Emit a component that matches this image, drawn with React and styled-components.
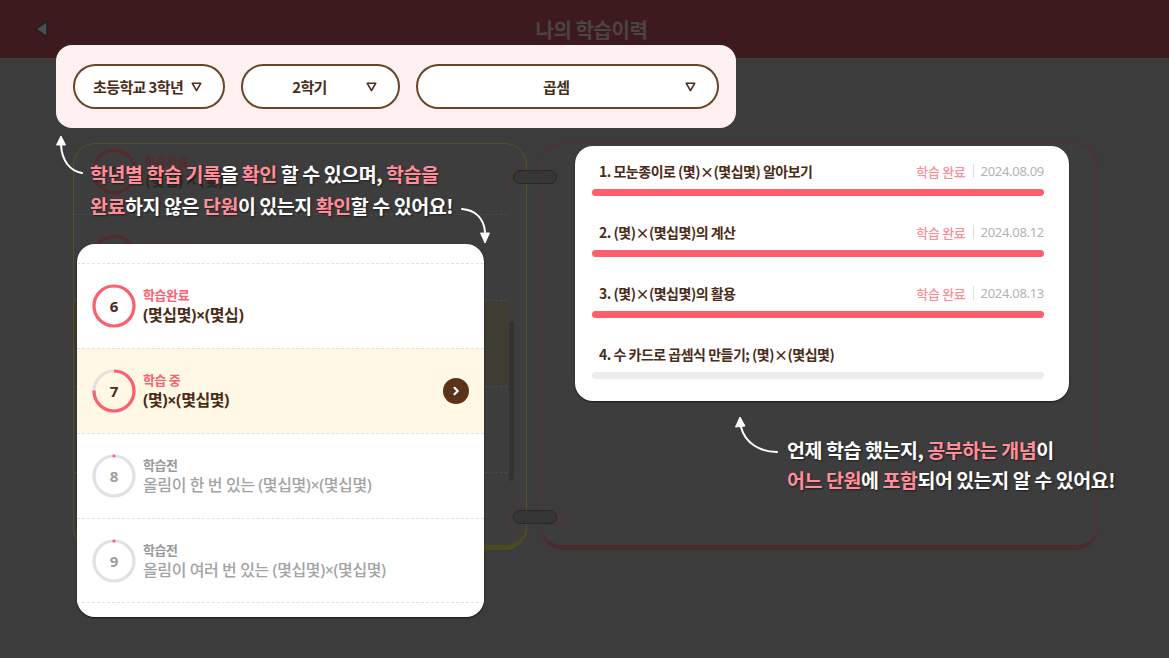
import React from 'react';
import styled, { createGlobalStyle } from 'styled-components';

const GlobalStyle = createGlobalStyle`
  html, body { margin: 0; padding: 0; background: #3c3c3c; }
  body { font-family: "Noto Sans CJK KR", "Noto Sans", sans-serif; }
  * { box-sizing: border-box; }
`;

const FONT = `"Noto Sans CJK KR", "Noto Sans", sans-serif`;
const LATIN_FIRST = `"Noto Sans", "Noto Sans CJK KR", sans-serif`;

const Page = styled.div`
  position: relative;
  width: 1169px;
  height: 658px;
  overflow: hidden;
  background: #3c3c3c;
  font-family: ${FONT};
`;

const TopBar = styled.header`
  height: 58px;
  background: #3d1a1d;
  display: grid;
  grid-template-columns: 80px 1fr 80px;
  align-items: center;
`;

const BackButton = styled.button`
  background: none;
  border: 0;
  padding: 0 0 0 34px;
  height: 58px;
  display: flex;
  align-items: center;
`;

const Title = styled.h1`
  margin: 0;
  text-align: center;
  font-size: 20px;
  font-weight: 700;
  color: #4b4444;
  letter-spacing: -0.4px;
  padding-left: 14px;
`;

const Content = styled.main`
  padding: 85px 71px 0 73px;
`;

const Binder = styled.div`
  position: relative;
  display: grid;
  grid-template-columns: 454px 557px;
  gap: 14px;
  height: 407px;
`;

const Sheet = styled.section`
  position: relative;
  border: 1.5px solid ${p => p.$edge};
  border-bottom: 5px solid ${p => p.$shade};
  border-radius: 22px;
  background: #3d3d3d;
  overflow: hidden;
`;

const RingMount = styled.div`
  position: absolute;
  left: 430px;
  top: ${p => p.$top}px;
  width: 64px;
  height: 24px;
  padding: 5px 10px;
  background:
    radial-gradient(circle at 11px 12px, #413a3b 10px, transparent 10.5px),
    radial-gradient(circle at 53px 12px, #413a3b 10px, transparent 10.5px);
`;

const RingBar = styled.div`
  height: 14px;
  border-radius: 7px;
  background: #363636;
  border: 1.5px solid #282828;
`;

const DimScroller = styled.div`
  display: grid;
  grid-template-columns: 1fr 5px;
  gap: 1px;
  padding: 0 12px 0 0;
  height: 100%;
`;

const DimList = styled.div`
  margin-top: -15px;
`;

const DimRow = styled.div`
  height: 86px;
  display: flex;
  align-items: center;
  gap: 8px;
  padding-left: 18px;
  border-bottom: 1px dashed #4a4a4a;
  background: ${p => (p.$current ? '#3f3c33' : 'transparent')};
`;

const DimRing = styled.div`
  width: 45px;
  height: 45px;
  border-radius: 50%;
  border: 3px solid #562a2d;
  display: grid;
  place-items: center;
  font-weight: 700;
  font-size: 15px;
  color: #2d2624;
`;

const DimText = styled.div`
  display: flex;
  flex-direction: column;
  font-weight: 700;
  line-height: 1.3;
  span:first-child { font-size: 12px; color: #582a2e; }
  span:last-child { font-size: 15px; color: #2b2725; }
`;

const DimThumb = styled.div`
  margin-top: 177px;
  height: 160px;
  border-radius: 3px;
  background: #333333;
`;

/* ---------- coach-mark layer ---------- */

const Coach = styled.div`
  position: absolute;
  inset: 0;
`;

const FilterBar = styled.div`
  position: absolute;
  left: 56px;
  top: 45px;
  width: 680px;
  height: 83px;
  background: #fff0f2;
  border-radius: 16px;
  display: flex;
  align-items: center;
  gap: 16px;
  padding: 0 17px;
`;

const Select = styled.button`
  width: ${p => p.$w}px;
  height: 45px;
  border: 2px solid #6a4526;
  border-radius: 23px;
  background: #fff;
  display: flex;
  align-items: center;
  gap: 6px;
  padding: 0 21px 0 16px;
  font-family: ${FONT};
  font-weight: 700;
  font-size: 15px;
  color: #4a2c17;
  letter-spacing: -0.6px;
`;

const SelectLabel = styled.span`
  flex: 1;
  text-align: center;
`;

const Callout = styled.p`
  position: absolute;
  left: ${p => p.$x}px;
  top: ${p => p.$y}px;
  margin: 0;
  font-size: 19.5px;
  font-weight: 700;
  line-height: ${p => p.$lh}px;
  color: #ffffff;
  white-space: nowrap;
  letter-spacing: -0.45px;
  text-shadow: 1px 1px 2px rgba(0, 0, 0, 0.55);
`;

const Em = styled.span`
  color: #ff8d9a;
`;

const ArrowSvg = styled.svg`
  position: absolute;
  overflow: visible;
`;

const UnitCard = styled.div`
  position: absolute;
  left: 77px;
  top: 244px;
  width: 407px;
  height: 373px;
  background: #fff;
  border-radius: 18px;
  overflow: hidden;
  padding-top: 19px;
  box-shadow: 0 1px 2px rgba(0, 0, 0, 0.6);
`;

const UnitRow = styled.div`
  height: 85px;
  display: flex;
  align-items: center;
  padding: 0 15px 0 15px;
  border-top: 1px dashed #e2e2e2;
  background: ${p => (p.$current ? '#fff8e5' : '#fff')};
  &:last-child { border-bottom: 1px dashed #e2e2e2; }
`;

const RingBox = styled.div`
  display: grid;
  width: 44px;
  height: 44px;
  margin-right: 7px;
  & > * { grid-area: 1 / 1; }
`;

const RingNum = styled.span`
  place-self: center;
  font-family: ${LATIN_FIRST};
  font-weight: 700;
  font-size: 15px;
  color: ${p => (p.$muted ? '#9e9e9e' : '#4a2c17')};
`;

const UnitText = styled.div`
  flex: 1;
  display: flex;
  flex-direction: column;
  gap: 1px;
`;

const UnitState = styled.span`
  font-size: 13px;
  font-weight: 700;
  line-height: 18px;
  letter-spacing: -0.4px;
  color: ${p => (p.$muted ? '#9a9a9a' : '#ff5f6d')};
`;

const UnitName = styled.span`
  font-family: ${LATIN_FIRST};
  font-size: 16px;
  font-weight: ${p => (p.$muted ? 500 : 700)};
  line-height: 21px;
  letter-spacing: -0.4px;
  color: ${p => (p.$muted ? '#a3a3a3' : '#4a2c17')};
`;

const GoButton = styled.span`
  width: 26px;
  height: 26px;
  border-radius: 50%;
  background: #5a3318;
  display: grid;
  place-items: center;
`;

const HistoryCard = styled.div`
  position: absolute;
  left: 575px;
  top: 146px;
  width: 494px;
  height: 255px;
  background: #fff;
  border-radius: 18px;
  padding: 15px 25px 0 17px;
  box-shadow: 0 1px 2px rgba(0, 0, 0, 0.6);
`;

const HistoryItem = styled.div`
  display: flex;
  flex-direction: column;
  gap: 8px;
  margin-bottom: 26px;
`;

const HistoryHead = styled.div`
  display: flex;
  align-items: center;
  justify-content: space-between;
  height: 20px;
  padding-left: 7px;
`;

const HistoryTitle = styled.span`
  font-size: 14px;
  font-weight: 700;
  color: #4a2c17;
  letter-spacing: -0.5px;
`;

const HistoryMeta = styled.span`
  display: flex;
  align-items: center;
  gap: 7px;
  font-size: 13px;
  letter-spacing: -0.3px;
`;

const Done = styled.span`
  color: #ff8d99;
  font-weight: 500;
`;

const Sep = styled.span`
  width: 1px;
  height: 14px;
  background: #dedede;
`;

const DateText = styled.span`
  color: #b3b3b3;
  font-family: "Noto Sans", "Liberation Sans", sans-serif;
`;

const Bar = styled.div`
  height: 7px;
  border-radius: 4px;
  background: ${p => (p.$done ? '#ff5f6d' : '#ececec')};
`;

function Caret() {
  return (
    <svg width="11" height="10" viewBox="0 0 11 10">
      <path d="M1.3 1.3 H9.7 L5.5 8.6 Z" fill="none" stroke="#4a2c17" strokeWidth="1.6" strokeLinejoin="round" />
    </svg>
  );
}

function ProgressRing({ value, num, muted }) {
  const r = 20;
  const c = 2 * Math.PI * r;
  const dash = value > 0 ? c * value : 0.01;
  return (
    <RingBox>
      <svg width="44" height="44" viewBox="0 0 44 44">
        <circle cx="22" cy="22" r={r} fill="none" stroke="#e1e1e1" strokeWidth="3.2" />
        <circle
          cx="22" cy="22" r={r} fill="none" stroke="#ff5f6d" strokeWidth="3.2"
          strokeDasharray={`${dash} ${c}`} strokeLinecap={value > 0 && value < 1 ? 'butt' : 'round'}
          transform="rotate(-90 22 22)"
        />
      </svg>
      <RingNum $muted={muted}>{num}</RingNum>
    </RingBox>
  );
}

function Arrow({ x, y, w, h, d, head }) {
  return (
    <ArrowSvg style={{ left: x, top: y }} width={w} height={h} viewBox={`${x} ${y} ${w} ${h}`}>
      <path d={d} fill="none" stroke="#fff" strokeWidth="2" strokeLinecap="round" />
      <polygon points={head} fill="#fff" stroke="#fff" strokeWidth="1" strokeLinejoin="round" />
    </ArrowSvg>
  );
}

const units = [
  { num: 6, state: '학습완료', name: '(몇십몇)×(몇십)', value: 1 },
  { num: 7, state: '학습 중', name: '(몇)×(몇십몇)', value: 0.75, current: true },
  { num: 8, state: '학습전', name: '올림이 한 번 있는 (몇십몇)×(몇십몇)', value: 0, muted: true },
  { num: 9, state: '학습전', name: '올림이 여러 번 있는 (몇십몇)×(몇십몇)', value: 0, muted: true },
];

const history = [
  { title: '1. 모눈종이로 (몇)×(몇십몇) 알아보기', date: '2024.08.09', done: true },
  { title: '2. (몇)×(몇십몇)의 계산', date: '2024.08.12', done: true },
  { title: '3. (몇)×(몇십몇)의 활용', date: '2024.08.13', done: true },
  { title: '4. 수 카드로 곱셈식 만들기; (몇)×(몇십몇)', done: false },
];

const dimRows = [
  { num: 5, state: '학습완료', name: '(몇십)×(몇)' },
  { num: 6, state: '학습완료', name: '(몇십몇)×(몇십)' },
  { num: 7, state: '학습 중', name: '(몇)×(몇십몇)', current: true },
  { num: 8, state: '학습전', name: '올림이 한 번 있는 (몇십몇)×(몇십몇)' },
  { num: 9, state: '학습전', name: '올림이 여러 번 있는 (몇십몇)×(몇십몇)' },
];

export default function App() {
  return (
    <Page>
      <GlobalStyle />
      <TopBar>
        <BackButton aria-label="뒤로">
          <svg width="15" height="18" viewBox="0 0 15 18">
            <path d="M13 1.5 L1.8 9 L13 16.5 Z" fill="#4a4d55" stroke="#1f1f1f" strokeWidth="1.5" strokeLinejoin="round" />
          </svg>
        </BackButton>
        <Title>나의 학습이력</Title>
        <span />
      </TopBar>

      <Content>
        <Binder>
          <Sheet $edge="#56511f" $shade="#4e4a1d">
            <DimScroller>
              <DimList>
                {dimRows.map(r => (
                  <DimRow key={r.num} $current={r.current}>
                    <DimRing>{r.num}</DimRing>
                    <DimText>
                      <span>{r.state}</span>
                      <span>{r.name}</span>
                    </DimText>
                  </DimRow>
                ))}
              </DimList>
              <DimThumb />
            </DimScroller>
          </Sheet>
          <Sheet $edge="#5a2d31" $shade="#4a2c2f" />
          <RingMount $top={22}><RingBar /></RingMount>
          <RingMount $top={362}><RingBar /></RingMount>
        </Binder>
      </Content>

      <Coach>
        <FilterBar>
          <Select $w={153}><SelectLabel>초등학교 3학년</SelectLabel><Caret /></Select>
          <Select $w={159}><SelectLabel>2학기</SelectLabel><Caret /></Select>
          <Select $w={305}><SelectLabel>곱셈</SelectLabel><Caret /></Select>
        </FilterBar>

        <Arrow x={50} y={130} w={40} h={50} d="M82 173 C70 171 62 161 61 145" head="61,136 56.5,145 65.5,145" />
        <Callout $x={90} $y={158} $lh={32}>
          <Em>학년별 학습 기록</Em>을 <Em>확인</Em> 할 수 있으며, <Em>학습을</Em>
          <br />
          <Em>완료</Em>하지 않은 <Em>단원</Em>이 있는지 <Em>확인</Em>할 수 있어요!
        </Callout>
        <Arrow x={455} y={200} w={40} h={50} d="M462 209 C475 210 484 218 485 232" head="485,243 480.5,233 489.5,233" />

        <UnitCard>
          {units.map(u => (
            <UnitRow key={u.num} $current={u.current}>
              <ProgressRing value={u.value} num={u.num} muted={u.muted} />
              <UnitText>
                <UnitState $muted={u.muted}>{u.state}</UnitState>
                <UnitName $muted={u.muted}>{u.name}</UnitName>
              </UnitText>
              {u.current && (
                <GoButton>
                  <svg width="12" height="12" viewBox="0 0 12 12">
                    <path d="M4.5 2.8 L7.8 6 L4.5 9.2" fill="none" stroke="#fff" strokeWidth="2.2" strokeLinecap="round" strokeLinejoin="round" />
                  </svg>
                </GoButton>
              )}
            </UnitRow>
          ))}
        </UnitCard>

        <HistoryCard>
          {history.map(h => (
            <HistoryItem key={h.title}>
              <HistoryHead>
                <HistoryTitle>{h.title}</HistoryTitle>
                {h.done && (
                  <HistoryMeta>
                    <Done>학습 완료</Done>
                    <Sep />
                    <DateText>{h.date}</DateText>
                  </HistoryMeta>
                )}
              </HistoryHead>
              <Bar $done={h.done} />
            </HistoryItem>
          ))}
        </HistoryCard>

        <Arrow x={730} y={410} w={55} h={50} d="M777 452 C760 452 745 443 741 427" head="740,417 735.5,427 745,426" />
        <Callout $x={787} $y={435} $lh={30}>
          언제 학습 했는지, <Em>공부하는 개념</Em>이
          <br />
          <Em>어느 단원</Em>에 <Em>포함</Em>되어 있는지 알 수 있어요!
        </Callout>
      </Coach>
    </Page>
  );
}
